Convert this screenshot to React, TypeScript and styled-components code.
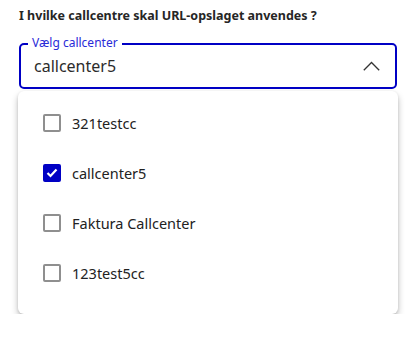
import styled, { createGlobalStyle } from 'styled-components'

const GlobalStyle = createGlobalStyle`
  body {
    margin: 0;
    background: #ffffff;
    font-family: "Noto Sans", "Open Sans", sans-serif;
    color: #222222;
  }
`

const Page = styled.div`
  padding: 8px 19px 0 19px;
  width: 378px;
`

const Question = styled.div`
  font-size: 12.5px;
  font-weight: 700;
  color: #262626;
  line-height: 16px;
  margin-bottom: 19px;
`

const Field = styled.div`
  position: relative;
  height: 46px;
  box-sizing: border-box;
  border: 2px solid #0000c4;
  border-radius: 5px;
  padding: 0 15px 0 13px;
  display: flex;
  align-items: center;
  justify-content: space-between;
`

const FloatLabel = styled.span`
  position: absolute;
  top: -9px;
  left: 7px;
  padding: 0 4px;
  background: #ffffff;
  font-size: 12px;
  line-height: 14px;
  color: #2a2ad8;
`

const Value = styled.span`
  font-size: 16px;
  color: #2b2b2b;
`

const Chevron = styled.svg`
  width: 17px;
  height: 10px;
`

const Panel = styled.div`
  margin: 2px -1px 0 -1px;
  background: #ffffff;
  border-radius: 6px;
  box-shadow: 0 4px 7px rgba(0, 0, 0, 0.24), 0 1px 3px rgba(0, 0, 0, 0.12);
  padding: 7px 25px 16px 25px;
`

const Option = styled.label`
  display: flex;
  align-items: center;
  gap: 11px;
  height: 50px;
  font-size: 14.5px;
  color: #222222;
`

const Box = styled.span<{ $checked?: boolean }>`
  width: 18px;
  height: 18px;
  box-sizing: border-box;
  border-radius: 2px;
  border: 2px solid ${({ $checked }) => ($checked ? '#0000c4' : '#8f8f8f')};
  background: ${({ $checked }) => ($checked ? '#0000c4' : '#ffffff')};
  display: flex;
  align-items: center;
  justify-content: center;
`

const options = [
  { label: '321testcc', checked: false },
  { label: 'callcenter5', checked: true },
  { label: 'Faktura Callcenter', checked: false },
  { label: '123test5cc', checked: false },
]

const App = () => (
  <Page>
    <GlobalStyle />
    <Question>I hvilke callcentre skal URL-opslaget anvendes ?</Question>
    <Field>
      <FloatLabel>Vælg callcenter</FloatLabel>
      <Value>callcenter5</Value>
      <Chevron viewBox="0 0 17 10">
        <path d="M0.8 9.2 L8.5 1.5 L16.2 9.2" fill="none" stroke="#333" strokeWidth="1.3" />
      </Chevron>
    </Field>
    <Panel>
      {options.map((o) => (
        <Option key={o.label}>
          <Box $checked={o.checked}>
            {o.checked && (
              <svg width="12" height="10" viewBox="0 0 12 10">
                <path d="M1.5 5 L4.5 8 L10.5 1.5" fill="none" stroke="#fff" strokeWidth="2.2" />
              </svg>
            )}
          </Box>
          {o.label}
        </Option>
      ))}
    </Panel>
  </Page>
)

export default App
